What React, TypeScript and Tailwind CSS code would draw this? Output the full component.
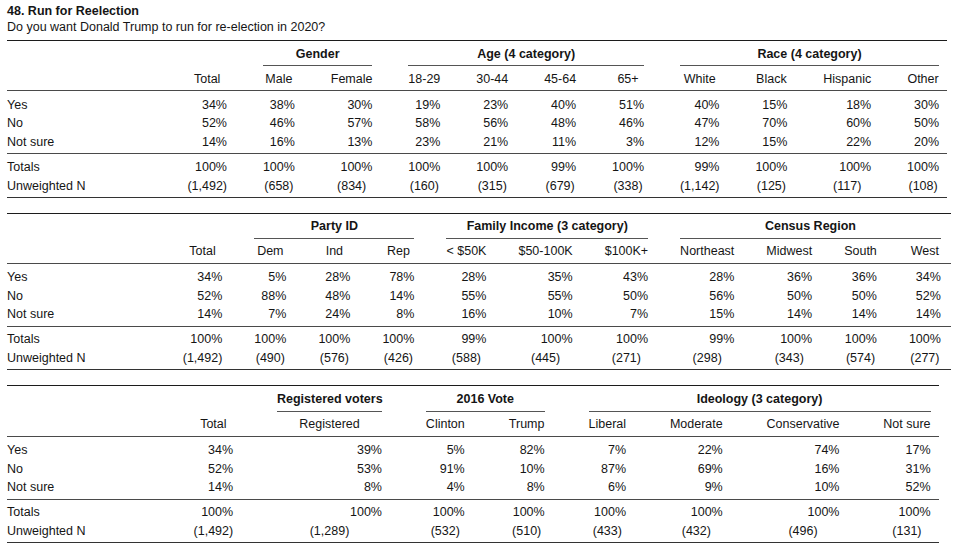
import React from "react";

type Group = { label: string; cls: string };
type TableDef = {
  width: string;
  cols: string;
  groups: Group[];
  headers: string[];
  rows: [string, string[]][];
  totals: string[];
  n: string[];
};

const T1: TableDef = {
  width: "w-[940px]",
  cols: "grid grid-cols-[144.5px_39.6px_32px_41.7px_32px_32px_32px_32px_39.6px_32px_47.9px_32px] gap-x-[35.9px]",
  groups: [
    { label: "Gender", cls: "col-start-3 col-end-5" },
    { label: "Age (4 category)", cls: "col-start-5 col-end-9" },
    { label: "Race (4 category)", cls: "col-start-9 col-end-13" },
  ],
  headers: ["Total", "Male", "Female", "18-29", "30-44", "45-64", "65+", "White", "Black", "Hispanic", "Other"],
  rows: [
    ["Yes", ["34%", "38%", "30%", "19%", "23%", "40%", "51%", "40%", "15%", "18%", "30%"]],
    ["No", ["52%", "46%", "57%", "58%", "56%", "48%", "46%", "47%", "70%", "60%", "50%"]],
    ["Not sure", ["14%", "16%", "13%", "23%", "21%", "11%", "3%", "12%", "15%", "22%", "20%"]],
  ],
  totals: ["100%", "100%", "100%", "100%", "100%", "99%", "100%", "99%", "100%", "100%", "100%"],
  n: ["(1,492)", "(658)", "(834)", "(160)", "(315)", "(679)", "(338)", "(1,142)", "(125)", "(117)", "(108)"],
};

const T2: TableDef = {
  width: "w-[944px]",
  cols: "grid grid-cols-[143.7px_39.6px_32px_32px_32px_40px_54.2px_43.4px_54.2px_45.8px_32.7px_32px] gap-x-[32.04px]",
  groups: [
    { label: "Party ID", cls: "col-start-3 col-end-6" },
    { label: "Family Income (3 category)", cls: "col-start-6 col-end-9" },
    { label: "Census Region", cls: "col-start-9 col-end-13" },
  ],
  headers: ["Total", "Dem", "Ind", "Rep", "< $50K", "$50-100K", "$100K+", "Northeast", "Midwest", "South", "West"],
  rows: [
    ["Yes", ["34%", "5%", "28%", "78%", "28%", "35%", "43%", "28%", "36%", "36%", "34%"]],
    ["No", ["52%", "88%", "48%", "14%", "55%", "55%", "50%", "56%", "50%", "50%", "52%"]],
    ["Not sure", ["14%", "7%", "24%", "8%", "16%", "10%", "7%", "15%", "14%", "14%", "14%"]],
  ],
  totals: ["100%", "100%", "100%", "100%", "99%", "100%", "100%", "99%", "100%", "100%", "100%"],
  n: ["(1,492)", "(490)", "(576)", "(426)", "(588)", "(445)", "(271)", "(298)", "(343)", "(574)", "(277)"],
};

const T3: TableDef = {
  width: "w-[932px]",
  cols: "grid grid-cols-[142.7px_39.6px_105px_38.9px_36.1px_37.5px_52.8px_72.9px_47.2px] gap-x-[43.86px]",
  groups: [
    { label: "Registered voters", cls: "col-start-3 col-end-4" },
    { label: "2016 Vote", cls: "col-start-4 col-end-6" },
    { label: "Ideology (3 category)", cls: "col-start-6 col-end-10" },
  ],
  headers: ["Total", "Registered", "Clinton", "Trump", "Liberal", "Moderate", "Conservative", "Not sure"],
  rows: [
    ["Yes", ["34%", "39%", "5%", "82%", "7%", "22%", "74%", "17%"]],
    ["No", ["52%", "53%", "91%", "10%", "87%", "69%", "16%", "31%"]],
    ["Not sure", ["14%", "8%", "4%", "8%", "6%", "9%", "10%", "52%"]],
  ],
  totals: ["100%", "100%", "100%", "100%", "100%", "100%", "100%", "100%"],
  n: ["(1,492)", "(1,289)", "(532)", "(510)", "(433)", "(432)", "(496)", "(131)"],
};

function CrossTable({ t, className }: { t: TableDef; className?: string }) {
  return (
    <div className={`${t.width} ${className ?? ""}`}>
      <div className="h-px bg-[#1c1c1c]" />
      <div className={`${t.cols} pt-[3.7px] pb-[2px] leading-[18.6px]`}>
        {t.groups.map((g) => (
          <div
            key={g.label}
            className={`${g.cls} row-start-1 whitespace-nowrap text-center font-bold pb-[2px] border-b border-[#555]`}
          >
            {g.label}
          </div>
        ))}
        <div className="row-start-2 pt-[3.4px]" />
        {t.headers.map((h) => (
          <div key={h} className="row-start-2 whitespace-nowrap text-center pt-[3.4px]">
            {h}
          </div>
        ))}
      </div>
      <div className="h-px bg-[#4a4a4a]" />
      <div className={`${t.cols} pt-[4.6px] pb-[1.9px] leading-[18.5px]`}>
        {t.rows.map(([label, vals]) => (
          <React.Fragment key={label}>
            <div className="whitespace-nowrap">{label}</div>
            {vals.map((v, i) => (
              <div key={i} className="whitespace-nowrap text-right">
                {v}
              </div>
            ))}
          </React.Fragment>
        ))}
      </div>
      <div className="h-px bg-[#4a4a4a]" />
      <div className={`${t.cols} pt-[3.5px] pb-[1.3px] leading-[18.8px]`}>
        <div className="whitespace-nowrap">Totals</div>
        {t.totals.map((v, i) => (
          <div key={i} className="whitespace-nowrap text-right">
            {v}
          </div>
        ))}
        <div className="whitespace-nowrap">Unweighted N</div>
        {t.n.map((v, i) => (
          <div key={i} className="whitespace-nowrap text-center">
            {v}
          </div>
        ))}
      </div>
      <div className="h-px bg-[#333]" />
    </div>
  );
}

export default function App() {
  return (
    <div className="w-[963px] h-[548px] overflow-hidden bg-white pl-[7px] pt-[2.7px] font-['Liberation_Sans',Arial,sans-serif] text-[12.5px] text-[#151515]">
      <div className="font-bold leading-[16px]">48. Run for Reelection</div>
      <div className="leading-[16px]">Do you want Donald Trump to run for re-election in 2020?</div>
      <CrossTable t={T1} className="mt-[5.3px]" />
      <CrossTable t={T2} className="mt-[15px]" />
      <CrossTable t={T3} className="mt-[15px]" />
    </div>
  );
}
